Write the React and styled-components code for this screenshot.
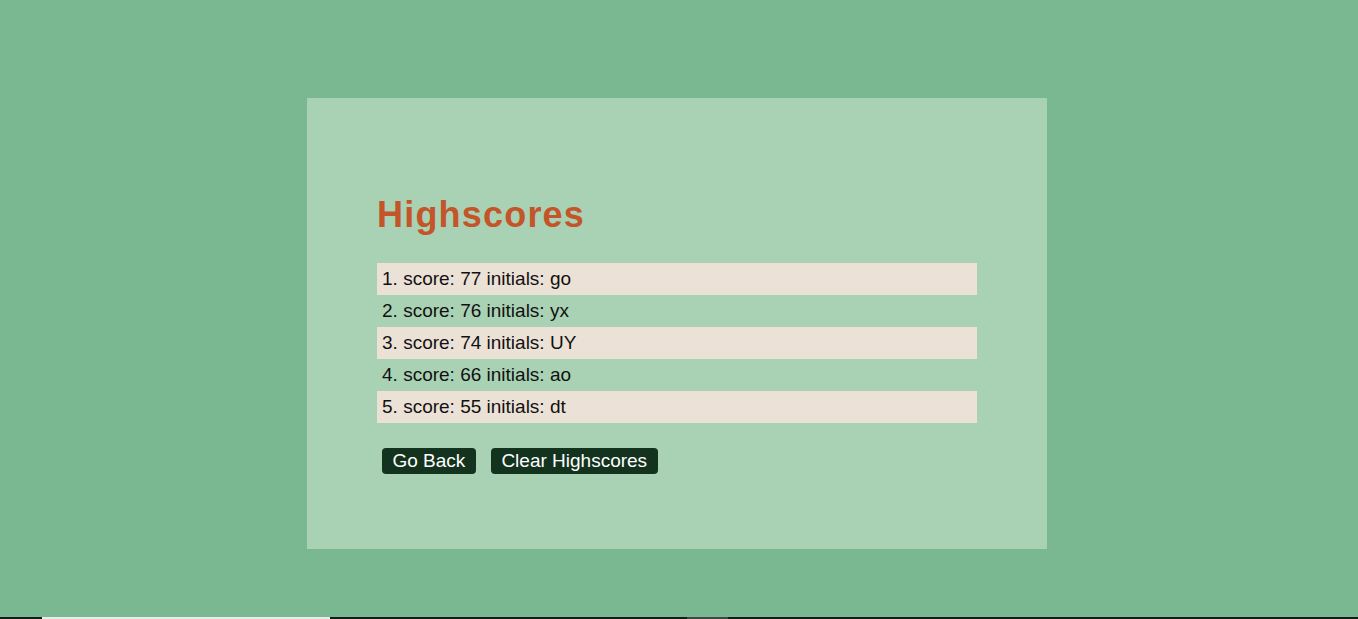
import styled, { createGlobalStyle } from 'styled-components';

const scores = [
  { score: 77, initials: 'go' },
  { score: 76, initials: 'yx' },
  { score: 74, initials: 'UY' },
  { score: 66, initials: 'ao' },
  { score: 55, initials: 'dt' },
];

const GlobalStyle = createGlobalStyle`
  body {
    margin: 0;
    background: #7ab891;
    font-family: "Liberation Sans", Arial, sans-serif;
  }
`;

const App = () => {
  const renderList = () => (
    <List>
      {scores.map((item, i) => (
        <Row key={`Row-${i}`} $shaded={i % 2 === 0}>
          {i + 1}. score: {item.score} initials: {item.initials}
        </Row>
      ))}
    </List>
  );

  return (
    <>
      <GlobalStyle />
      <Main>
        <Card>
          <Title>Highscores</Title>
          {renderList()}
          <Actions>
            <Button>Go Back</Button>
            <Button>Clear Highscores</Button>
          </Actions>
        </Card>
      </Main>
      <Footer>
        <FooterBar $width={288} $color="#e6efe6" />
        <FooterBar $width={357} $color="#0f1f13" />
        <FooterBar $width={41} $color="#3d4a40" />
      </Footer>
    </>
  );
};

const Main = styled.main`
  box-sizing: border-box;
  display: flex;
  justify-content: center;
  align-items: flex-start;
  height: 617px;
  padding: 98px 4px 0 0;
`;

const Card = styled.section`
  box-sizing: border-box;
  width: 740px;
  height: 451px;
  background: #a9d1b3;
  padding: 93px 70px 0;
`;

const Title = styled.h1`
  margin: 0 0 24px;
  color: #c4552a;
  font-size: 36px;
  font-weight: bold;
  letter-spacing: 1.2px;
  line-height: 48px;
`;

const List = styled.ol`
  list-style: none;
  margin: 0;
  padding: 0;
  width: 600px;
`;

const Row = styled.li`
  height: 32px;
  line-height: 32px;
  padding-left: 5px;
  font-size: 19px;
  color: #111;
  background: ${({ $shaded }) => ($shaded ? '#ece1d6' : 'transparent')};
`;

const Actions = styled.div`
  display: flex;
  gap: 15px;
  margin: 25px 0 0 5px;
`;

const Button = styled.button`
  height: 26px;
  padding: 0 10.5px;
  border: none;
  border-radius: 4px;
  background: #14331f;
  color: #fff;
  font-family: "Liberation Sans", Arial, sans-serif;
  font-size: 19px;
  line-height: 26px;
`;

const Footer = styled.footer`
  display: flex;
  height: 2px;
  padding-left: 42px;
  background: #0f1f13;
`;

const FooterBar = styled.div`
  width: ${({ $width }) => $width}px;
  background: ${({ $color }) => $color};
`;

export default App;
